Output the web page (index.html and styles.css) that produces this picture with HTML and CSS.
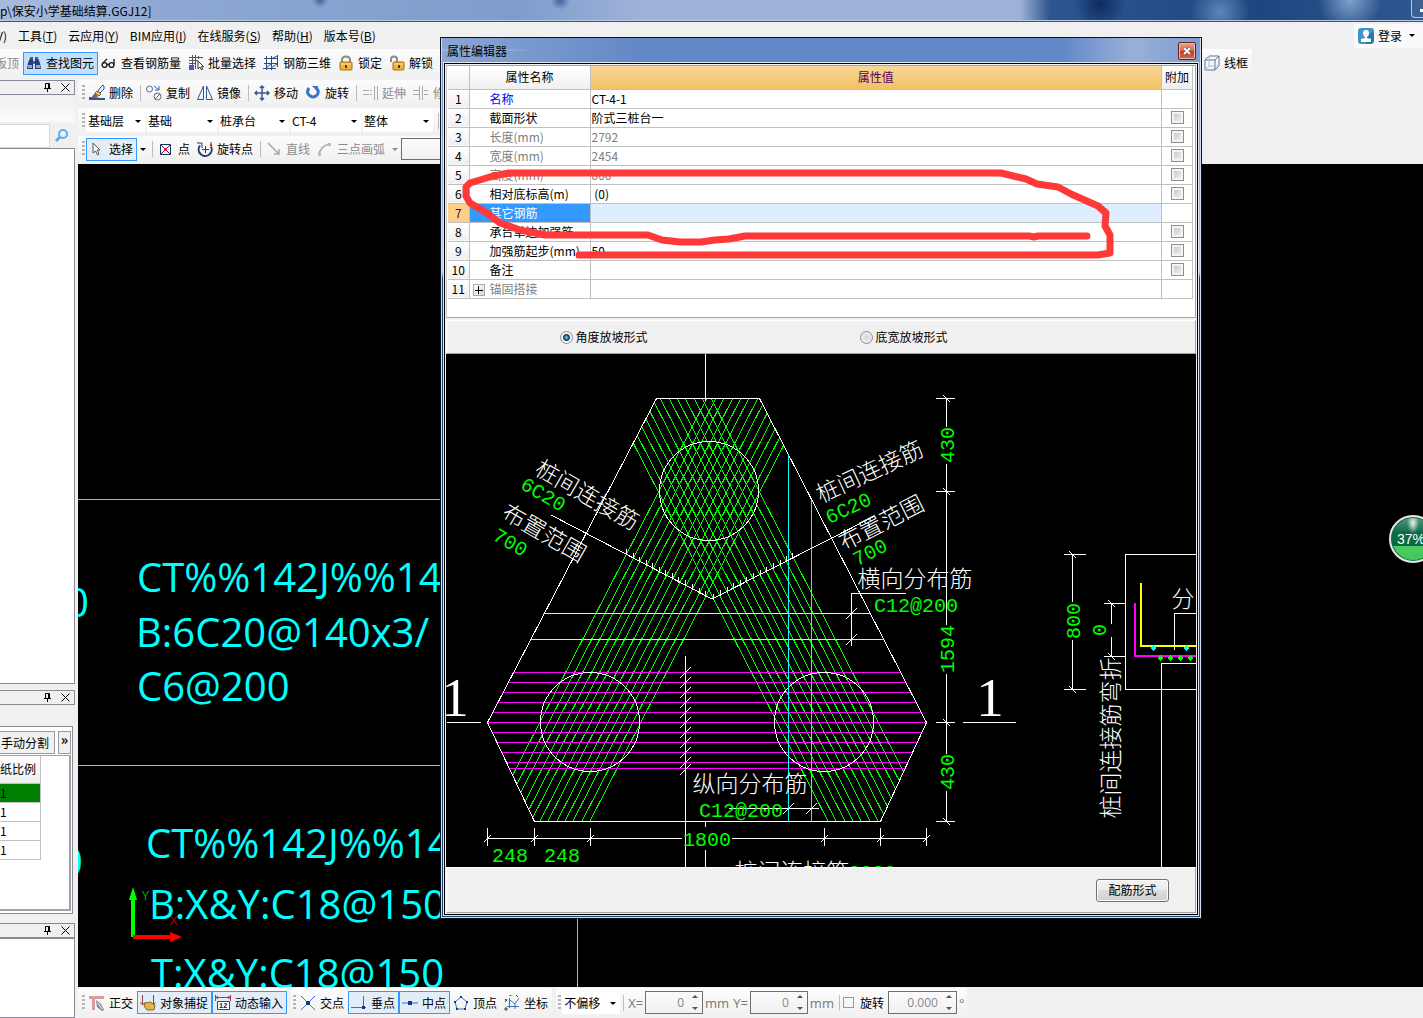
FILE: index.html
```html
<!DOCTYPE html>
<html lang="zh-CN">

<head>
    <meta charset="UTF-8">
    <meta name="viewport" content="width=device-width, initial-scale=1.0">
    <title>保安小学基础结算.GGJ12</title>
    <link rel="stylesheet" href="styles.css">
</head>

<body>
    <div class="app">
        <header class="titlebar">
            <span class="titlebar-text">p\保安小学基础结算.GGJ12]</span>
            <button class="minimize" aria-label="最小化"></button>
        </header>

        <nav class="menubar">
            <button class="menu-item">V)</button>
            <button class="menu-item">工具(<u>T</u>)</button>
            <button class="menu-item">云应用(<u>Y</u>)</button>
            <button class="menu-item">BIM应用(<u>I</u>)</button>
            <button class="menu-item">在线服务(<u>S</u>)</button>
            <button class="menu-item">帮助(<u>H</u>)</button>
            <button class="menu-item">版本号(<u>B</u>)</button>
            <button class="login">
                <svg class="icon" viewBox="0 0 16 16"><rect width="16" height="16" rx="3" fill="#3e96c8"/><path d="M8 9l6-5 2 2v7l-3 3H8z" fill="#2a78a8"/><path d="M8 2q3 0 3 3t-2 4v1l4 1v3H3v-3l4-1V9Q5 8 5 5t3-3z" fill="#fff"/></svg>
                <span>登录</span>
                <span class="arrow"></span>
            </button>
        </nav>

        <div class="toolbar toolbar-main">
            <button class="tool cut" disabled>板顶</button>
            <button class="tool active">
                <svg class="icon" viewBox="0 0 16 16"><path d="M1 14l1-6 2-5h3v11H1zM9 14V3h3l2 5 1 6z" fill="#2b3f75"/><path d="M2 10h4v3H2zM10 10h4v3h-4z" fill="#8fa6d6"/><path d="M4 2h3v2H4zM9 2h3v2H9zM7 6h2v3H7z" fill="#4a5f96"/></svg>
                查找图元
            </button>
            <button class="tool">
                <svg class="icon" viewBox="0 0 16 16" fill="none" stroke="#222" stroke-width="1.4"><circle cx="3.500" cy="10" r="2.400"/><circle cx="10.500" cy="10" r="2.400"/><path d="M1.500 8.500L6 4M13 10V4M6 9.500h2"/></svg>
                查看钢筋量
            </button>
            <button class="tool">
                <svg class="icon" viewBox="0 0 16 16" fill="none" stroke="#555"><path d="M1 2.500h14M1 5.500h9M4.500 0v10M7.500 0v14M1 8.500h7M10.500 1v3"/><path d="M1 10h5v5H1z" fill="#3d62b8" stroke="none"/><path d="M10 6v8l2-2 1.500 3 1-1-1-2.500h2z" fill="#fff" stroke="#333"/></svg>
                批量选择
            </button>
            <button class="tool">
                <svg class="icon" viewBox="0 0 16 16" fill="none" stroke="#2e4a86"><path d="M1 3.500h14M0 13.500h13M3.500 1v14M8.500 1v14M14.500 0v12M1 8.500h14M3 13l5-4M8 13l6-4M8 4l6-3"/></svg>
                钢筋三维
            </button>
            <button class="tool">
                <svg class="icon" viewBox="0 0 16 16"><path d="M4 8V5q0-3.500 4-3.500T12 5v3" fill="none" stroke="#8b8b8b" stroke-width="2"/><rect x="2" y="7" width="12" height="8" rx="1" fill="#efb43a" stroke="#a06d10"/><path d="M3 9h10" stroke="#fbe09a"/><path d="M7 10h2v3H7z" fill="#5a3b08"/></svg>
                锁定
            </button>
            <button class="tool">
                <svg class="icon" viewBox="0 0 16 16"><path d="M2 7V4q0-2.500 3-2.500T8 4v3" fill="none" stroke="#8b8b8b" stroke-width="2"/><rect x="4" y="7" width="11" height="8" rx="1" fill="#efb43a" stroke="#a06d10"/><path d="M5 9h9" stroke="#fbe09a"/><path d="M9 10h2v3H9z" fill="#5a3b08"/></svg>
                解锁
            </button>
            <button class="tool wireframe">
                <svg class="icon" viewBox="0 0 16 16" fill="none" stroke="#5f7396"><path d="M1 5h10v10H1zM1 5l4-4h10v10l-4 4M11 5l4-4"/><path d="M5 1v10h10M5 11l-4 4" stroke="#a8bcdd"/></svg>
                线框
            </button>
        </div>

        <div class="workspace">
            <aside class="sidebar">
                <div class="dock-head">
                    <svg class="dock-icon" viewBox="0 0 9 9"><path d="M2.500 5V.500h4V5M1 5.500h7M4.500 6v3" fill="none" stroke="#000"/><path d="M5 1h1v4H5z"/></svg>
                    <svg class="dock-icon" viewBox="0 0 9 9"><path d="M.500.500l8 8M8.500.500l-8 8" fill="none" stroke="#000"/></svg>
                </div>
                <div class="search">
                    <input type="text" aria-label="搜索">
                    <button class="search-button" aria-label="搜索">
                        <svg class="icon" viewBox="0 0 16 16" fill="none" stroke="#5eb0e4"><circle cx="9" cy="6" r="4" stroke-width="2"/><path d="M6 9l-4 4" stroke-width="3"/></svg>
                    </button>
                </div>
                <div class="tree"></div>
                <div class="dock-head">
                    <svg class="dock-icon" viewBox="0 0 9 9"><path d="M2.500 5V.500h4V5M1 5.500h7M4.500 6v3" fill="none" stroke="#000"/><path d="M5 1h1v4H5z"/></svg>
                    <svg class="dock-icon" viewBox="0 0 9 9"><path d="M.500.500l8 8M8.500.500l-8 8" fill="none" stroke="#000"/></svg>
                </div>
                <div class="drawings">
                    <div class="drawings-bar">
                        <button class="split">手动分割</button>
                        <button class="more">»</button>
                    </div>
                    <div class="drawings-list">
                        <table class="scale-table">
                            <tr><th>纸比例</th></tr>
                            <tr class="current"><td>1</td></tr>
                            <tr><td>1</td></tr>
                            <tr><td>1</td></tr>
                            <tr><td>1</td></tr>
                        </table>
                    </div>
                </div>
                <div class="dock-head">
                    <svg class="dock-icon" viewBox="0 0 9 9"><path d="M2.500 5V.500h4V5M1 5.500h7M4.500 6v3" fill="none" stroke="#000"/><path d="M5 1h1v4H5z"/></svg>
                    <svg class="dock-icon" viewBox="0 0 9 9"><path d="M.500.500l8 8M8.500.500l-8 8" fill="none" stroke="#000"/></svg>
                </div>
                <div class="dock-bottom"></div>
            </aside>

            <main class="drawing-area">
                <div class="toolbars">
                    <div class="toolbar">
                        <span class="grip"></span>
                        <button class="tool">
                            <svg class="icon" viewBox="0 0 16 16"><path d="M0 12h6l5 1h5v2H0z" fill="#2b5a8e"/><path d="M11 3l3-3 1 1v3l-4 4-2-2z" fill="#e9eef8" stroke="#2d4f94"/><path d="M8 6l4 3-2 2-4-3z" fill="#f0c75a" stroke="#8a6a20"/><path d="M2 13l4-5 3 3-2 2z" fill="#a34a66"/></svg>
                            删除
                        </button>
                        <span class="sep"></span>
                        <button class="tool">
                            <svg class="icon" viewBox="0 0 16 16" fill="none" stroke="#5a6b85"><circle cx="3.500" cy="4" r="3"/><circle cx="11.500" cy="11.500" r="3.500"/><path d="M9 14l5-5"/><path d="M8 1l5 4M13 1v4H9" stroke="#2f65b5"/></svg>
                            复制
                        </button>
                        <button class="tool">
                            <svg class="icon" viewBox="0 0 16 16" fill="none" stroke="#2b579f"><path d="M6.500 1v13.500h-6zM9.500 1v13.500h6z"/></svg>
                            镜像
                        </button>
                        <span class="sep"></span>
                        <button class="tool">
                            <svg class="icon" viewBox="0 0 16 16" fill="none" stroke="#3a5a92" stroke-width="1.500"><path d="M8 1v14M1 8h14M6 3l2-2 2 2M6 13l2 2 2-2M3 6L1 8l2 2M13 6l2 2-2 2"/></svg>
                            移动
                        </button>
                        <button class="tool">
                            <svg class="icon" viewBox="0 0 16 16"><path d="M4 3q-3 4 0 7 4 4 8 0 3-4-1-7" fill="none" stroke="#3a72cc" stroke-width="3"/><path d="M7 1h6v6z" fill="#3a72cc"/></svg>
                            旋转
                        </button>
                        <span class="sep"></span>
                        <button class="tool" disabled>
                            <svg class="icon" viewBox="0 0 16 16" fill="none" stroke="#aaa"><path d="M1 5.500h6M1 9.500h6M8 5.500h2M8 9.500h2M12.500 1v14M15.500 1v14"/></svg>
                            延伸
                        </button>
                        <button class="tool" disabled>
                            <svg class="icon" viewBox="0 0 16 16" fill="none" stroke="#aaa"><path d="M0 5.500h6M0 9.500h6M6.500 1v14M9.500 1v14M11 5.500h4M11 9.500h4"/></svg>
                            修剪
                        </button>
                    </div>
                    <div class="toolbar combos">
                        <span class="grip"></span>
                        <label class="combo combo-floor"><select aria-label="楼层"><option>基础层</option></select></label>
                        <label class="combo"><select aria-label="构件类别"><option>基础</option></select></label>
                        <label class="combo"><select aria-label="构件类型"><option>桩承台</option></select></label>
                        <label class="combo"><select aria-label="构件名称"><option>CT-4</option></select></label>
                        <label class="combo"><select aria-label="单元"><option>整体</option></select></label>
                        <span class="sep"></span>
                    </div>
                    <div class="toolbar">
                        <span class="grip"></span>
                        <button class="tool active">
                            <svg class="icon" viewBox="0 0 16 16"><path d="M4 2v10l2.500-2 2 4 1.500-1-2-4h3z" fill="#fff" stroke="#555"/></svg>
                            选择
                        </button>
                        <span class="arrow"></span>
                        <span class="sep"></span>
                        <button class="tool">
                            <svg class="icon" viewBox="0 0 16 16" fill="none"><path d="M2.500 3.500h10v10h-10z" stroke="#1e2a66"/><path d="M3 4l9 9M12 4l-9 9" stroke="#333"/><path d="M6 7h3v3H6z" fill="#e02020"/></svg>
                            点
                        </button>
                        <button class="tool">
                            <svg class="icon" viewBox="0 0 16 16" fill="none" stroke="#1f3f7a"><path d="M3 4.500a6.500 6.500 0 1 0 11 1" stroke-width="2"/><path d="M0 2h5v5M8.500 5v7M5 8.500h7M14 1v3"/><path d="M13 3h2v2h-2z" fill="#d22" stroke="none"/></svg>
                            旋转点
                        </button>
                        <span class="sep"></span>
                        <button class="tool" disabled>
                            <svg class="icon" viewBox="0 0 16 16" fill="none" stroke="#aaa" stroke-width="1.500"><path d="M2 2l11 11M13 8v5H8"/></svg>
                            直线
                        </button>
                        <button class="tool" disabled>
                            <svg class="icon" viewBox="0 0 16 16" fill="none" stroke="#aaa" stroke-width="1.500"><path d="M2 14Q3 5 13 3"/><path d="M1 12h3v3H1zM4 6h2v2H4zM11 2h3v3h-3z" fill="#bbb" stroke="none"/></svg>
                            三点画弧
                        </button>
                        <span class="arrow arrow-off"></span>
                        <input class="tool-input" type="text" aria-label="弧半径">
                    </div>
                </div>

                <svg class="canvas" role="img" aria-label="绘图区">
                    <g transform="translate(-78 -164)">
                        <path class="cad-cyan" d="M78 499.500H600M78 765.500H600M577.500 765V1000"/>
                        <g class="canvas-text">
                            <text x="66" y="617">0</text>
                            <text x="137" y="592">CT%%142J%%14</text>
                            <text x="136" y="647">B:6C20@140x3/</text>
                            <text x="137" y="701">C6@200</text>
                            <text x="60" y="876">0</text>
                            <text x="146" y="858">CT%%142J%%14</text>
                            <text x="149" y="919">B:X&amp;Y:C18@150</text>
                            <text x="151" y="988">T:X&amp;Y:C18@150</text>
                        </g>
                        <path d="M131 937V900h-2l4-13 4 13h-2v37z" fill="#0f0"/>
                        <path d="M133 935h37v-3l12 5-12 5v-3h-37z" fill="#f00"/>
                        <text class="axis" x="142" y="900" fill="#0f0">Y</text>
                        <text class="axis" x="170" y="925" fill="#f00">X</text>
                    </g>
                </svg>

                <footer class="statusbar">
                    <div class="toolbar">
                        <span class="grip"></span>
                        <button class="tool">
                            <svg class="icon" viewBox="0 0 16 16"><path d="M0 1h15v3H6v11H3V4H0z" fill="#d99c9c"/><path d="M7 5l5 4 3 6-2 1-5-4z" fill="#7d8ba3"/><path d="M9 8l4 6" stroke="#fff"/></svg>
                            正交
                        </button>
                        <button class="tool active">
                            <svg class="icon" viewBox="0 0 16 16"><path d="M2.500 0v10M13.500 0v9M0 7.500l2.500 2 3-2M11 7.500l2.500 2 2-2" stroke="#8a4040" fill="none"/><path d="M5 8l5-1 5 3-1 5H7l-3-4z" fill="#ddb64e" stroke="#8a6a20"/></svg>
                            对象捕捉
                        </button>
                        <button class="tool active">
                            <svg class="icon" viewBox="0 0 16 16" fill="none"><path d="M.500 0v6M15.500 0v6M1 2.500h14M3 1L1 2.500 3 4M13 1l2 1.500L13 4" stroke="#a04040"/><path d="M2.500 6.500h12v8h-12z" fill="#fff" stroke="#444"/><text class="icon-text" x="4" y="13">12</text></svg>
                            动态输入
                        </button>
                    </div>
                    <div class="toolbar">
                        <span class="grip"></span>
                        <button class="tool">
                            <svg class="icon" viewBox="0 0 16 16"><path d="M1 1l14 14M15 1L1 15" stroke="#2e74c8"/><path d="M6 6h4v4H6z" fill="#123a80"/></svg>
                            交点
                        </button>
                        <button class="tool active">
                            <svg class="icon" viewBox="0 0 16 16"><path d="M12.500 1v12M0 12.500h15" stroke="#2e74c8"/><path d="M11 11h3v3h-3z" fill="#123a80"/></svg>
                            垂点
                        </button>
                        <button class="tool active">
                            <svg class="icon" viewBox="0 0 16 16"><path d="M0 8h16" stroke="#2e74c8"/><path d="M6 6h4v4H6z" fill="#123a80"/></svg>
                            中点
                        </button>
                        <button class="tool">
                            <svg class="icon" viewBox="0 0 16 16"><path d="M8 2l6 5-2 7H4L2 7z" fill="none" stroke="#2e74c8"/><path d="M7 1h2v2H7zM13 6h2v2h-2zM1 6h2v2H1zM3 13h2v2H3zM11 13h2v2h-2z" fill="#123a80"/></svg>
                            顶点
                        </button>
                        <button class="tool">
                            <svg class="icon" viewBox="0 0 16 16" fill="none" stroke="#3d70b0"><path d="M5.500 3v10M3 11.500h12M6 5l5 4 4-6M11 9v5"/><path d="M1 4l2 2M3 4l-2 3M12 0l2 2M1 13h2v2H1zM5 0h2v1" stroke="#444"/></svg>
                            坐标
                        </button>
                    </div>
                    <div class="toolbar offsets">
                        <span class="grip"></span>
                        <label class="combo combo-offset"><select aria-label="偏移方式"><option>不偏移</option></select></label>
                        <span class="sep"></span>
                        <label class="unit" for="offset-x">X=</label>
                        <span class="spin"><input id="offset-x" type="number" value="0" disabled></span>
                        <span class="unit">mm</span>
                        <label class="unit" for="offset-y">Y=</label>
                        <span class="spin"><input id="offset-y" type="number" value="0" disabled></span>
                        <span class="unit">mm</span>
                        <span class="sep"></span>
                        <input class="flat-check" id="rotate" type="checkbox">
                        <label class="rotate-label" for="rotate">旋转</label>
                        <span class="spin spin-wide"><input type="number" value="0.000" step="0.001" aria-label="旋转角度" disabled></span>
                        <span class="unit">°</span>
                    </div>
                </footer>
            </main>
        </div>

        <section class="dialog" role="dialog" aria-labelledby="dialog-title">
            <div class="dialog-head">
                <h1 id="dialog-title">属性编辑器</h1>
                <button class="close" aria-label="关闭">
                    <svg viewBox="0 0 8 8"><path d="M1 1l6 6M7 1L1 7" stroke="#4a3a44" stroke-width="3"/><path d="M1 1l6 6M7 1L1 7" stroke="#fff" stroke-width="2"/></svg>
                </button>
            </div>
            <div class="dialog-body">
                <div class="grid-wrap">
                    <table class="props">
                        <colgroup>
                            <col class="col-index">
                            <col class="col-name">
                            <col>
                            <col class="col-extra">
                        </colgroup>
                        <thead>
                            <tr><th></th><th>属性名称</th><th class="value-head">属性值</th><th>附加</th></tr>
                        </thead>
                        <tbody>
                            <tr><th>1</th><td class="name key">名称</td><td>CT-4-1</td><td></td></tr>
                            <tr><th>2</th><td class="name">截面形状</td><td>阶式三桩台一</td><td class="extra"><input type="checkbox" aria-label="附加 截面形状"></td></tr>
                            <tr class="readonly"><th>3</th><td class="name">长度(mm)</td><td>2792</td><td class="extra"><input type="checkbox" aria-label="附加 长度"></td></tr>
                            <tr class="readonly"><th>4</th><td class="name">宽度(mm)</td><td>2454</td><td class="extra"><input type="checkbox" aria-label="附加 宽度"></td></tr>
                            <tr class="readonly"><th>5</th><td class="name">高度(mm)</td><td>800</td><td class="extra"><input type="checkbox" aria-label="附加 高度"></td></tr>
                            <tr><th>6</th><td class="name">相对底标高(m)</td><td>&nbsp;(0)</td><td class="extra"><input type="checkbox" aria-label="附加 相对底标高"></td></tr>
                            <tr class="selected"><th>7</th><td class="name">其它钢筋</td><td></td><td></td></tr>
                            <tr><th>8</th><td class="name">承台单边加强筋</td><td></td><td class="extra"><input type="checkbox" aria-label="附加 承台单边加强筋"></td></tr>
                            <tr><th>9</th><td class="name">加强筋起步(mm)</td><td>50</td><td class="extra"><input type="checkbox" aria-label="附加 加强筋起步"></td></tr>
                            <tr><th>10</th><td class="name">备注</td><td></td><td class="extra"><input type="checkbox" aria-label="附加 备注"></td></tr>
                            <tr class="readonly"><th>11</th><td class="name group"><button class="expand" aria-label="展开"></button>锚固搭接</td><td></td><td></td></tr>
                        </tbody>
                    </table>
                </div>

                <div class="slope">
                    <label><input type="radio" name="slope" checked>角度放坡形式</label>
                    <label><input type="radio" name="slope">底宽放坡形式</label>
                </div>

                <svg class="diagram" role="img" aria-label="阶式三桩台配筋图">
                    <defs>
                        <clipPath id="cap"><path d="M656 398H759L927 722 880 822H535L487 722z"/></clipPath>
                    </defs>
                    <g transform="translate(-446 -354)">
                        <g clip-path="url(#cap)" class="lines">
                            <path class="cad-green" d="M590 821l218-423M582 821l218-423M573 821l218-423M565 821l218-423M557 821l218-423M548 821l218-423M540 821l218-423M531 821l218-423M523 821l218-423M515 821l218-423M506 821l218-423M498 821l218-423M489 821l218-423"/>
                            <path class="cad-green" d="M828 821L610 398M836 821L618 398M845 821L627 398M853 821L635 398M861 821L643 398M870 821L652 398M878 821L660 398M887 821L669 398M895 821L677 398M903 821L685 398M912 821L694 398M920 821L702 398M929 821L711 398"/>
                            <path class="cad-yellow" d="M480 613.500H940M480 639.500H940"/>
                            <path class="cad-magenta" d="M480 672.500H940M480 682.500H940M480 692.500H940M480 702.500H940M480 712.500H940M480 722.500H940M480 732.500H940M480 742.500H940M480 752.500H940M480 762.500H940M480 768.500H940"/>
                        </g>
                        <g class="lines">
                            <path class="cad-white" d="M656.500 398.500H759.500L926.500 722.500 880.500 821.500H534.500L487.500 722.500z"/>
                            <circle class="cad-white" cx="709" cy="491" r="49.500"/>
                            <circle class="cad-white" cx="590" cy="722" r="49.500"/>
                            <circle class="cad-white" cx="824" cy="722" r="49.500"/>
                            <path class="cad-cyan" d="M788.500 455V821M811.500 500V821"/>
                            <!-- axes and section marks -->
                            <path class="cad-white" d="M705.500 354V401M705.500 821V827M705.500 850V867M685.500 656V867M447 722.500H481M963 722.500H1016"/>
                            <!-- slashes across the distribution bars -->
                            <path class="cad-white" d="M680 678l11-11M680 688l11-11M680 698l11-11M680 708l11-11M680 718l11-11M680 728l11-11M680 738l11-11M680 748l11-11M680 758l11-11M680 768l11-11M680 775l11-11"/>
                            <path class="cad-white" d="M729 808.500H819M783 814l11-11M806 814l11-11"/>
                            <path class="cad-white" d="M906 593.500H851.500V646M846 619l11-11M846 645l11-11"/>
                            <!-- leaders with bar ticks -->
                            <path class="cad-white" d="M551 515L712 599 875 516"/>
                            <path class="cad-white" d="M626 549v6M633 553v6M639 557v6M646 560v6M652 563v6M659 567v6M665 570v6M672 573v6M678 577v6M685 580v6M692 584v6M699 588v6M705 591v6M713 594v6M720 590v6M727 587v6M733 583v6M740 580v6M746 577v6M753 573v6M760 570v6M766 567v6M773 563v6M780 560v6M786 556v6M792 553v6"/>
                            <!-- vertical dimensions -->
                            <path class="cad-white" d="M946.500 398V427M946.500 464V625M946.500 674V754M946.500 791V821M936 398.500H955M936 491.500H955M936 722.500H955M936 821.500H955M943 395l7 7M943 488l7 7M943 719l7 7M943 818l7 7"/>
                            <!-- horizontal dimensions -->
                            <path class="cad-white" d="M487 838.500H682M732 838.500H927M487.500 828V846M534.500 828V846M590.500 828V846M824.500 828V846M880.500 828V846M926.500 828V846M484 842l7-7M531 842l7-7M587 842l7-7M821 842l7-7M877 842l7-7M923 842l7-7"/>
                            <!-- section 1-1 -->
                            <path class="cad-white" d="M1300 554.500H1125.500V689.500H1300M1300 613.500H1174.500V650M1300 663.500H1161.500V867"/>
                            <path class="cad-white" d="M1072.500 554V602M1072.500 640V689M1064 554.500H1086M1064 689.500H1086M1069 551l7 7M1069 686l7 7M1111.500 603V624M1111.500 637V656M1104 603.500H1125M1104 656.500H1125M1108 600l7 7M1108 653l7 7"/>
                            <path class="cad-yellow thick" d="M1141 583V646H1300"/>
                            <path class="cad-magenta thick" d="M1135 603V656H1300"/>
                            <path fill="#0ff" d="M1153 645l3 3-3 3-3-3zM1186 645l3 3-3 3-3-3z"/>
                            <path fill="#0f0" d="M1160 655l3 3-3 3-3-3zM1170 655l3 3-3 3-3-3zM1180 655l3 3-3 3-3-3zM1190 655l3 3-3 3-3-3z"/>
                        </g>
                        <g class="cad-label">
                            <text transform="translate(583 502) rotate(30)">桩间连接筋</text>
                            <text transform="translate(540 540) rotate(30)">布置范围</text>
                            <text transform="translate(873 479) rotate(-25)">桩间连接筋</text>
                            <text transform="translate(885 530) rotate(-27)">布置范围</text>
                            <text x="915" y="587">横向分布筋</text>
                            <text x="750" y="792">纵向分布筋</text>
                            <text x="792" y="880">桩间连接筋</text>
                            <text x="1183" y="607">分</text>
                            <text transform="translate(1119 738) rotate(-90)">桩间连接筋弯折</text>
                        </g>
                        <g class="cad-size">
                            <text transform="translate(540 500) rotate(30)">6C20</text>
                            <text transform="translate(507 548) rotate(30)">700</text>
                            <text transform="translate(851 514) rotate(-25)">6C20</text>
                            <text transform="translate(873 558) rotate(-27)">700</text>
                            <text x="916" y="612">C12@200</text>
                            <text x="741" y="817">C12@200</text>
                            <text x="707" y="846">1800</text>
                            <text x="510" y="862">248</text>
                            <text x="562" y="862">248</text>
                            <text x="872" y="879">6C20</text>
                            <text transform="translate(954 445) rotate(-90)">430</text>
                            <text transform="translate(954 649) rotate(-90)">1594</text>
                            <text transform="translate(954 772) rotate(-90)">430</text>
                            <text transform="translate(1080 621) rotate(-90)">800</text>
                            <text transform="translate(1106 630) rotate(-90)">0</text>
                        </g>
                        <g class="cad-section">
                            <text x="455" y="716">1</text>
                            <text x="990" y="716">1</text>
                        </g>
                    </g>
                </svg>

                <div class="dialog-foot">
                    <button class="rebar">配筋形式</button>
                </div>
            </div>

            <!-- hand-drawn marker -->
            <svg class="marker" aria-hidden="true">
                <g transform="translate(-440 -37)">
                    <path d="M1087 236H1038l-4 1-5-1H745l-16 3-14 1-14 2H680l-18-2-14-5H545l-25-5-20-7-13-10-17-10-4-7V187l4-4 23-7 17-3H1001l25 6 11 5 21 3 13 7 27 12 8 7-1 13 5 9v18l-12 2H579"/>
                </g>
            </svg>
        </section>

        <div class="speed-ball">37%</div>
    </div>
</body>

</html>
```
FILE: styles.css
```css
* {
    box-sizing: border-box;
}

body {
    margin: 0;
    background: #f0f0f0;
    color: #000;
    font-family: "Noto Sans CJK SC", sans-serif;
    font-size: 12px;
    line-height: 18px;
}

button,
input,
select {
    margin: 0;
    padding: 0;
    border: 0;
    border-radius: 0;
    background: none;
    color: inherit;
    font: inherit;
}

.app {
    position: relative;
    display: flex;
    flex-direction: column;
    height: 100vh;
    overflow: hidden;
}

/* title bar */

.titlebar {
    display: flex;
    flex: none;
    align-items: center;
    justify-content: space-between;
    height: 22px;
    border-bottom: 1px solid #35557f;
    box-shadow: inset 0 -1px #b5c9e2;
    background:
        radial-gradient(circle at 320px 0, #3c62a0 0, transparent 8px),
        radial-gradient(circle at 560px 0, #3c62a0 0, transparent 10px),
        radial-gradient(ellipse at 1062px 16px, #9db3d6 0, transparent 16px),
        radial-gradient(circle at 1100px 4px, #0d2c5e 0, transparent 26px),
        radial-gradient(circle at 1220px 12px, #5f86b8 0, transparent 30px),
        radial-gradient(circle at 1350px 0, #7fa3cf 0, transparent 32px),
        linear-gradient(90deg, #a9bbdc 0, #8fa8d3 160px, #7f9ccd 520px, #9db2d8 640px, #9db2d8 1020px, #2d5590 1050px, #1f467f 1260px, #2f5790 100%);
}

.minimize {
    width: 12px;
    height: 18px;
    align-self: flex-start;
    border: 1px solid #b9c9dd;
    border-width: 0 0 1px 1px;
    border-radius: 0 0 0 4px;
    background: linear-gradient(#fff, #fff) 8px 9px / 8px 3px no-repeat #3b6194;
}

/* menu */

.menubar {
    display: flex;
    flex: none;
    align-items: center;
    gap: 11px;
    height: 27px;
}

.menu-item {
    white-space: nowrap;
}

.menu-item:first-child {
    margin-left: -4px;
}

.login {
    display: flex;
    align-items: center;
    gap: 4px;
    height: 24px;
    margin-left: auto;
    padding: 0 5px 0 4px;
    background: #fafafa;
}

/* toolbars */

.toolbar {
    display: flex;
    flex: none;
    align-items: center;
    height: 26px;
    overflow: hidden;
    border-radius: 2px;
    background: linear-gradient(#fcfcfc, #f0f0f0);
    white-space: nowrap;
}

.toolbar-main {
    height: 28px;
    margin: 0 171px 3px 0;
}

.tool {
    display: flex;
    flex: none;
    align-items: center;
    gap: 4px;
    height: 23px;
    padding: 0 3px 0 2px;
    border: 1px solid transparent;
}

.tool:disabled {
    color: #8c8c8c;
}

.tool.active {
    border-color: #3399ff;
    background: #e3edf8;
}

.toolbar-main .active {
    background: #c2dffc;
}

.cut {
    margin-left: -8px;
}

.wireframe {
    margin-left: auto;
}

.icon {
    flex: none;
    width: 16px;
    height: 16px;
}

.icon-text {
    fill: #222;
    font: 700 7px "Liberation Mono", monospace;
}

.grip {
    flex: none;
    width: 3px;
    height: 16px;
    margin: 0 1px 0 4px;
    background: repeating-linear-gradient(#b4b4b4 0, #b4b4b4 2px, transparent 2px, transparent 4px);
}

.sep {
    flex: none;
    width: 1px;
    height: 16px;
    margin: 0 2px 0 3px;
    background: #bdbdbd;
}

.arrow {
    flex: none;
    margin: 0 3px;
    border: 3px solid transparent;
    border-top-color: #000;
    border-bottom: 0;
}

.arrow-off {
    border-top-color: #8c8c8c;
}

.combos {
    gap: 2px;
}

.combos .grip {
    margin-right: 0;
}

.combo {
    position: relative;
    flex: none;
    width: 70px;
    height: 22px;
    background: #fff;
}

.combo::after {
    content: "";
    position: absolute;
    top: 10px;
    right: 4px;
    border: 3px solid transparent;
    border-top-color: #000;
    border-bottom: 0;
}

.combo select {
    width: 100%;
    height: 100%;
    padding-left: 1px;
    appearance: none;
}

.combo-floor,
.combo-offset {
    width: 58px;
}

.combo-offset select {
    padding-left: 2px;
}

.tool-input {
    flex: 0 0 70px;
    height: 22px;
    border: 1px solid #6e6e6e;
}

/* left docks */

.workspace {
    display: flex;
    flex: 1;
    min-height: 0;
}

.sidebar {
    display: flex;
    flex: none;
    flex-direction: column;
    width: 75px;
    margin-right: 3px;
}

.dock-head {
    display: flex;
    flex: none;
    align-items: center;
    justify-content: flex-end;
    gap: 9px;
    height: 15px;
    padding-right: 4px;
    border: 1px solid #8a8a94;
    border-left: 0;
}

.dock-icon {
    width: 9px;
    height: 9px;
}

.search {
    display: flex;
    flex: none;
    align-items: center;
    height: 53px;
    padding-top: 28px;
    background: linear-gradient(#f0f0f0, #fafafa 26px, #f0f0f0 28px);
}

.search input {
    width: 50px;
    height: 24px;
    border: 1px solid #d5d5dd;
    border-left: 0;
    background: #fff;
}

.search-button {
    display: flex;
    padding: 0 4px;
}

.tree {
    flex: 1;
    margin-bottom: 6px;
    border: 1px solid #8a8a94;
    border-left: 0;
    background: #fff;
}

.drawings {
    flex: none;
    height: 188px;
    margin: 21px 2px 9px 0;
    padding: 4px 1px 2px 0;
    border: 1px solid #8a8a94;
    border-left: 0;
    background: #fff;
}

.drawings-bar {
    display: flex;
    gap: 3px;
    height: 24px;
}

.drawings-bar button {
    height: 23px;
    border: 1px solid #9a9aa2;
    background: #f0f0f0;
}

.drawings-bar .split {
    width: 55px;
    padding-left: 1px;
    border-left: 0;
    text-align: left;
    white-space: nowrap;
}

.drawings-bar .more {
    width: 13px;
    padding-bottom: 8px;
    font-size: 14px;
    font-weight: 700;
    line-height: 12px;
}

.drawings-list {
    height: 156px;
    border: solid #a0a0a8;
    border-width: 1px 2px 2px 0;
}

.scale-table {
    width: 41px;
    border-collapse: collapse;
    line-height: 16px;
}

.scale-table th {
    height: 27px;
    padding: 0;
    border-right: 1px solid #c0c0c0;
    background: linear-gradient(#fff, #eee);
    font-weight: 400;
    text-align: left;
    white-space: nowrap;
}

.scale-table td {
    height: 19px;
    padding: 0;
    border: 1px solid #c0c0c0;
    border-left: 0;
}

.scale-table .current td {
    background: #008000;
}

.dock-bottom {
    flex: none;
    height: 80px;
    border: 1px solid #8a8a94;
    border-left: 0;
    background: #fff;
}

/* drawing area */

.drawing-area {
    display: flex;
    flex: 1;
    flex-direction: column;
    min-width: 0;
}

.toolbars {
    display: flex;
    flex: none;
    flex-direction: column;
    align-items: flex-start;
    gap: 2px;
    padding-bottom: 2px;
}

.canvas {
    display: block;
    flex: 1;
    width: 100%;
    min-height: 0;
    background: #000;
}

.canvas-text {
    fill: #0ff;
    font: 40px "Open Sans", "Noto Sans", sans-serif;
}

.axis {
    font: 300 13px "Open Sans", sans-serif;
}

/* status bar */

.statusbar {
    display: flex;
    flex: none;
    gap: 4px;
    height: 31px;
    align-items: center;
}

.statusbar .toolbar {
    height: 30px;
}

.statusbar .toolbar + .toolbar .grip {
    margin-left: 2px;
}

.offsets {
    color: #777;
}

.offsets .combo,
.rotate-label {
    color: #000;
}

.unit {
    padding: 0 2px;
    font: 13px "Open Sans", sans-serif;
}

.spin {
    position: relative;
    flex: none;
    width: 58px;
    height: 23px;
    border: 1px solid #6e6e6e;
}

.spin-wide {
    width: 69px;
}

.spin::before,
.spin::after {
    content: "";
    position: absolute;
    right: 4px;
    border: 3px solid transparent;
}

.spin::before {
    top: 3px;
    border-top: 0;
    border-bottom-color: #555;
}

.spin::after {
    bottom: 3px;
    border-bottom: 0;
    border-top-color: #555;
}

.spin input {
    width: 100%;
    height: 100%;
    padding-right: 18px;
    color: #888;
    font: 12px "Open Sans", sans-serif;
    text-align: right;
    appearance: textfield;
}

.spin input::-webkit-inner-spin-button {
    display: none;
}

.flat-check {
    width: 11px;
    height: 11px;
    margin: 0 6px 0 1px;
    border: 1px solid #999;
    appearance: none;
}

.rotate-label {
    margin-right: 4px;
}

/* property dialog */

.dialog {
    position: absolute;
    top: 37px;
    right: 221px;
    bottom: 99px;
    left: 440px;
    display: flex;
    flex-direction: column;
    padding: 0 3px 3px;
    border: 1px solid #0b1422;
    box-shadow: inset 0 0 0 1px #cfdcec;
    background: linear-gradient(#6c90cb 0, #89a6d6 120px, #b9c9df 234px, #1b4174 240px, #1b4174 100%);
}

.dialog-head {
    display: flex;
    flex: none;
    align-items: center;
    justify-content: space-between;
    height: 25px;
    margin: 0 -2px;
    padding: 0 4px 0 5px;
    background:
        radial-gradient(ellipse at 34px 12px, #c6d3e8 0, transparent 60px),
        radial-gradient(ellipse at 210px 28px, #3b67ae 0, transparent 18px),
        linear-gradient(90deg, #8ba6d4 0, #6288c6 200px, #6188c7 620px, #9ab0d8 690px, #7e9dd0 100%);
}

.dialog-head h1 {
    margin: 0;
    font-size: 12px;
    font-weight: 400;
    line-height: 18px;
}

.close {
    display: flex;
    align-items: center;
    justify-content: center;
    width: 18px;
    height: 18px;
    border: 1px solid #5c2420;
    border-radius: 2px;
    box-shadow: inset 0 0 0 1px #f0b6a6;
    background: linear-gradient(#e9a08e, #d9664c 50%, #bf3a1c 50%, #d8694c);
}

.close svg {
    width: 8px;
    height: 8px;
}

.dialog-body {
    display: flex;
    flex: 1;
    flex-direction: column;
    min-height: 0;
    border: 1px solid #000;
    box-shadow: 0 0 0 1px #dfe8f3;
    background: #f0f0f0;
    padding: 1px;
}

.grid-wrap {
    height: 253px;
    padding: 0 2px 0 1px;
    border: 1px solid #a0a4ac;
    border-left-color: #c8c8c8;
    background: #fff;
}

.props {
    width: 100%;
    border-collapse: collapse;
    table-layout: fixed;
    line-height: 16px;
}

.col-index {
    width: 21px;
}

.col-name {
    width: 121px;
}

.col-extra {
    width: 31px;
}

.props th,
.props td {
    height: 19px;
    padding: 0 0 0 1px;
    border: 1px solid #c0c0c0;
    border-width: 0 1px 1px 0;
    text-align: left;
    white-space: nowrap;
}

.props th {
    padding: 0;
    background: linear-gradient(#fff, #efefef);
    font-weight: 400;
    text-align: center;
}

.props thead th {
    height: 23px;
}

.props .value-head {
    background: linear-gradient(#f9d699, #f1c163);
    color: #5a005a;
}

.props .name {
    padding-left: 20px;
}

.props .key {
    color: #00f;
}

.props .readonly td {
    color: #808080;
}

.props .selected th {
    background: #fdd08a;
    color: #5a005a;
}

.props .selected td:nth-child(3) {
    background: #dfeefe;
}

.props .selected .name {
    background: #3399ff;
    color: #fff;
}

.props .extra {
    padding: 0;
    text-align: center;
}

.extra input {
    display: block;
    width: 13px;
    height: 13px;
    margin: 0 auto;
    border: 1px solid #8e8f8f;
    box-shadow: inset 0 0 0 2px #f4f4f4;
    background: linear-gradient(135deg, #bfc3c9, #f6f6f6);
    appearance: none;
}

.props .group {
    padding-left: 3px;
}

.expand {
    width: 12px;
    height: 12px;
    margin-right: 5px;
    border: 1px solid #aaa;
    vertical-align: middle;
    background:
        linear-gradient(#000, #000) center / 8px 1px no-repeat,
        linear-gradient(#000, #000) center / 1px 8px no-repeat,
        linear-gradient(135deg, #fff, #d5d8dd);
}

.slope {
    display: flex;
    align-items: center;
    gap: 212px;
    height: 34px;
    margin-top: 2px;
    padding-left: 15%;
    border: 1px solid #fff;
    border-right-color: #a0a0a0;
    border-bottom-color: #a0a0a0;
}

.slope label {
    display: flex;
    align-items: center;
    gap: 3px;
}

.slope input {
    width: 13px;
    height: 13px;
    border: 1px solid #8e8f8f;
    border-radius: 50%;
    background: radial-gradient(circle, #d8d8d8, #f6f6f6);
    appearance: none;
}

.slope input:checked {
    background: radial-gradient(circle, #8fd0f0 0, #1b6a9c 2px, #123a5c 3px, #f4f4f4 4px);
}

.diagram {
    display: block;
    flex: 1;
    width: 100%;
    min-height: 0;
    background: #000;
}

.lines {
    shape-rendering: crispEdges;
}

.cad-white,
.cad-green,
.cad-cyan,
.cad-yellow,
.cad-magenta {
    fill: none;
    stroke: #fff;
}

.cad-green {
    stroke: #0f0;
}

.cad-cyan {
    stroke: #0ff;
}

.cad-yellow {
    stroke: #ff0;
}

.cad-magenta {
    stroke: #f0f;
}

.thick {
    stroke-width: 2;
}

.cad-label {
    fill: #fff;
    font: 300 23px "Noto Sans CJK SC", sans-serif;
    text-anchor: middle;
}

.cad-size {
    fill: #0f0;
    font: 20px "Liberation Mono", monospace;
    text-anchor: middle;
}

.cad-section {
    fill: #fff;
    font: 55px "Liberation Serif", serif;
    text-anchor: middle;
}

.dialog-foot {
    display: flex;
    flex: none;
    align-items: center;
    justify-content: flex-end;
    height: 46px;
    padding: 0 26px 0 0;
    border: 1px solid #fff;
    border-right-color: #a0a0a0;
    border-bottom-color: #a0a0a0;
}

.rebar {
    width: 73px;
    height: 23px;
    border: 1px solid #707070;
    border-radius: 3px;
    box-shadow: inset 0 0 0 1px #fcfcfc;
    background: linear-gradient(#f2f2f2, #ebebeb 50%, #dddddd 50%, #cfcfcf);
}

.marker {
    position: absolute;
    inset: -1px;
    width: 100%;
    height: 100%;
    overflow: visible;
    pointer-events: none;
    fill: none;
    stroke: #fe3937;
    stroke-width: 7px;
    stroke-linecap: round;
    stroke-linejoin: round;
}

/* floating widget at the screen edge */

.speed-ball {
    position: absolute;
    top: 515px;
    right: -14px;
    width: 48px;
    height: 48px;
    padding-left: 6px;
    border: 2px solid #e6e6e6;
    border-radius: 50%;
    box-shadow: inset 0 0 0 1px #0b6b48;
    background:
        radial-gradient(ellipse at 22px 6px, #e8f5ee 0, transparent 6px),
        linear-gradient(#5b9c80 0, #0a6b48 16px, #07693f 29px, #4ccc60 29px, #45c45a 100%);
    color: #fff;
    font: 14px/44px "Liberation Sans", sans-serif;
}
```
